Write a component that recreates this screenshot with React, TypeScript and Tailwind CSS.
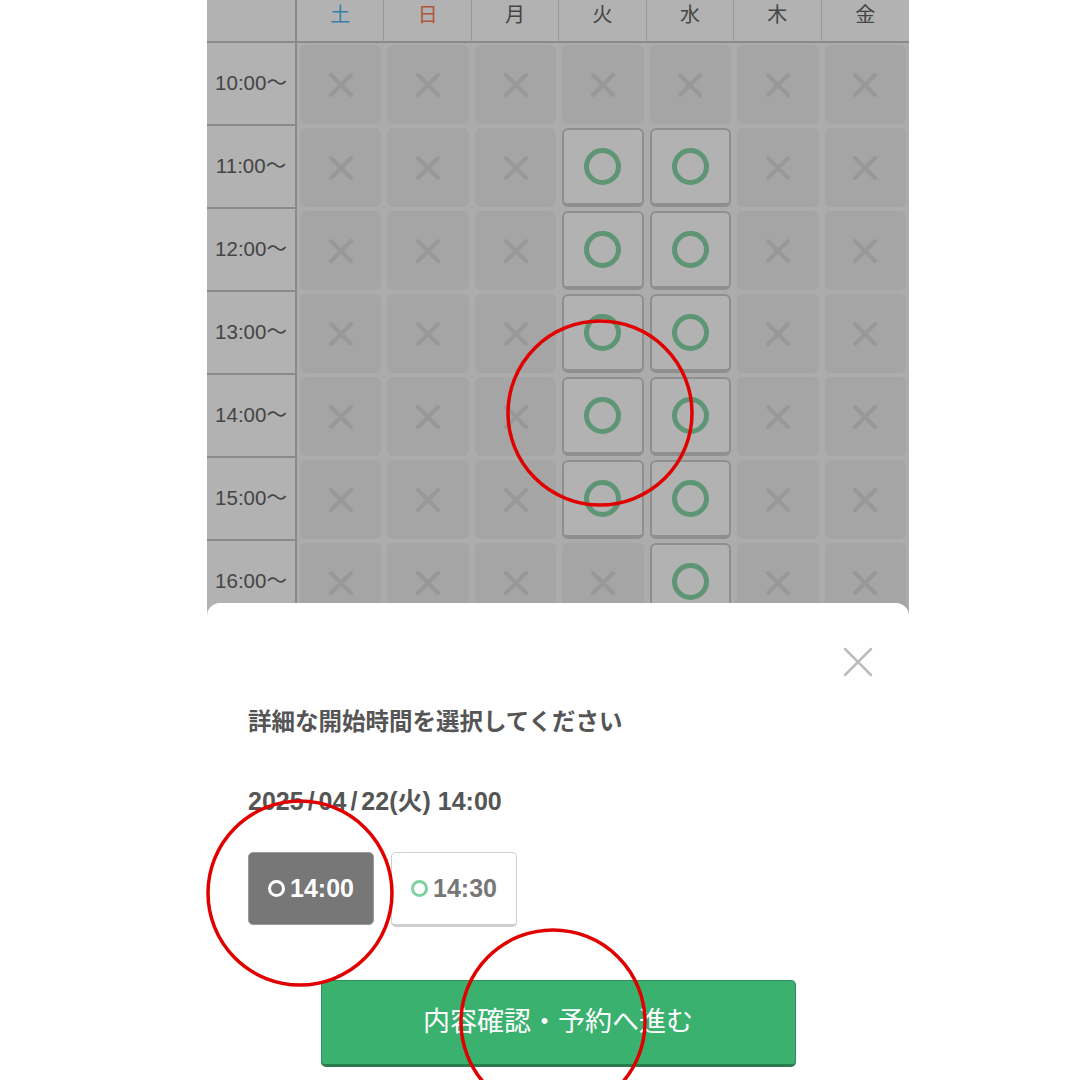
const days = [
  { label: '土', color: 'text-[#50b8f0]' },
  { label: '日', color: 'text-[#ff7a5a]' },
  { label: '月', color: 'text-[#636363]' },
  { label: '火', color: 'text-[#636363]' },
  { label: '水', color: 'text-[#636363]' },
  { label: '木', color: 'text-[#636363]' },
  { label: '金', color: 'text-[#636363]' },
];

const hours = ['10:00', '11:00', '12:00', '13:00', '14:00', '15:00', '16:00'];

// open slots: [dayIndex, hour]
const open: Record<number, string[]> = {
  3: ['11:00', '12:00', '13:00', '14:00', '15:00'],
  4: ['11:00', '12:00', '13:00', '14:00', '15:00', '16:00'],
};

function Cross() {
  return (
    <svg width="26" height="26" viewBox="0 0 26 26" fill="none" stroke="#dadada" strokeWidth="4" strokeLinecap="round">
      <path d="M3 3l20 20" />
      <path d="M23 3L3 23" />
    </svg>
  );
}

function Ring({ size, color, stroke }: { size: number; color: string; stroke: number }) {
  const r = size / 2 - stroke / 2;
  return (
    <svg width={size} height={size} viewBox={`0 0 ${size} ${size}`} fill="none">
      <circle cx={size / 2} cy={size / 2} r={r} stroke={color} strokeWidth={stroke} />
    </svg>
  );
}

function Slot({ available }: { available: boolean }) {
  if (available) {
    return (
      <div className="mx-[3px] my-[2px] h-[79px] rounded-[6px] bg-white border-2 border-b-4 border-[#cdcdcd] flex items-center justify-center">
        <Ring size={37} color="#86d6a8" stroke={5} />
      </div>
    );
  }
  return (
    <div className="mx-[3px] my-[2px] h-[79px] rounded-[6px] bg-[#ececec] flex items-center justify-center">
      <Cross />
    </div>
  );
}

function Calendar() {
  return (
    <div className="grid grid-cols-[90px_repeat(7,1fr)] bg-white">
      <div className="h-[43px] border-b-2 border-r-2 border-[#c6c6c6]" />
      {days.map((d, i) => (
        <div
          key={d.label}
          className={
            'h-[43px] border-b-2 border-[#c6c6c6] flex justify-center leading-[30px] text-[20px] ' +
            d.color +
            (i < 6 ? ' border-r border-r-[#dadada]' : '')
          }
        >
          {d.label}
        </div>
      ))}
      {hours.map((h) => (
        <div key={h} className="contents">
          <div className="h-[83px] border-b-2 border-r-2 border-[#c6c6c6] flex items-center justify-center text-[20.5px] text-[#636363]">
            {h}〜
          </div>
          {days.map((_, di) => (
            <div key={di} className="bg-[#f6f6f6]">
              <Slot available={(open[di] || []).includes(h)} />
            </div>
          ))}
        </div>
      ))}
    </div>
  );
}

function TimeSheet() {
  return (
    <div className="absolute left-0 right-0 top-[603px] bottom-0 bg-white rounded-t-[13px] flex flex-col">
      <div className="flex justify-end pt-[44px] pr-[36px]">
        <svg width="30" height="30" viewBox="0 0 30 30" fill="none" stroke="#bdbdbd" strokeWidth="2.5" strokeLinecap="round">
          <path d="M2 2l26 26" />
          <path d="M28 2L2 28" />
        </svg>
      </div>
      <div className="pl-[41px] mt-[29px] leading-[32px] text-[23.5px] font-bold text-[#555]">詳細な開始時間を選択してください</div>
      <div className="pl-[41px] mt-[47px] leading-[32px] text-[25px] font-bold text-[#555] font-['Liberation_Sans','Noto_Sans_CJK_JP',sans-serif]">
        2025<span className="px-[4px]">/</span>04<span className="px-[4px]">/</span>22(火) 14:00
      </div>
      <div className="pl-[41px] mt-[35px] flex gap-[17px]">
        <button className="w-[126px] h-[73px] rounded-[5px] bg-[#777] border border-[#9a9a9a] flex items-center justify-center gap-[5px] text-white text-[25px] font-bold font-['Liberation_Sans',sans-serif]">
          <Ring size={17} color="#ffffff" stroke={3} />
          14:00
        </button>
        <button className="w-[126px] h-[75px] rounded-[5px] bg-white border border-b-[3px] border-[#cfcfcf] flex items-center justify-center gap-[5px] text-[#777] text-[25px] font-bold font-['Liberation_Sans',sans-serif]">
          <Ring size={17} color="#7fd0a0" stroke={3} />
          14:30
        </button>
      </div>
      <div className="mt-[53px] flex justify-center">
        <button className="w-[475px] h-[87px] rounded-[5px] bg-[#3ab16f] border border-[#2f8d5a] border-b-[3px] border-b-[#2b7b4e] text-white text-[27px]">
          内容確認・予約へ進む
        </button>
      </div>
    </div>
  );
}

export default function App() {
  return (
    <div className="relative w-[1080px] h-[1080px] overflow-hidden bg-white font-['Liberation_Sans','Noto_Sans_CJK_JP',sans-serif]">
      <div className="relative ml-[207px] w-[702px] h-[1080px] overflow-hidden">
        <Calendar />
        {/* modal backdrop */}
        <div className="absolute inset-0 bg-black/30" />
        <TimeSheet />
      </div>
      {/* annotation marks */}
      <svg className="absolute inset-0 pointer-events-none" width="1080" height="1080" viewBox="0 0 1080 1080" fill="none" stroke="#e00000" strokeWidth="3.5">
        <circle cx="600" cy="413" r="92" />
        <circle cx="300" cy="893" r="92" />
        <circle cx="553" cy="1022" r="92" />
      </svg>
    </div>
  );
}
